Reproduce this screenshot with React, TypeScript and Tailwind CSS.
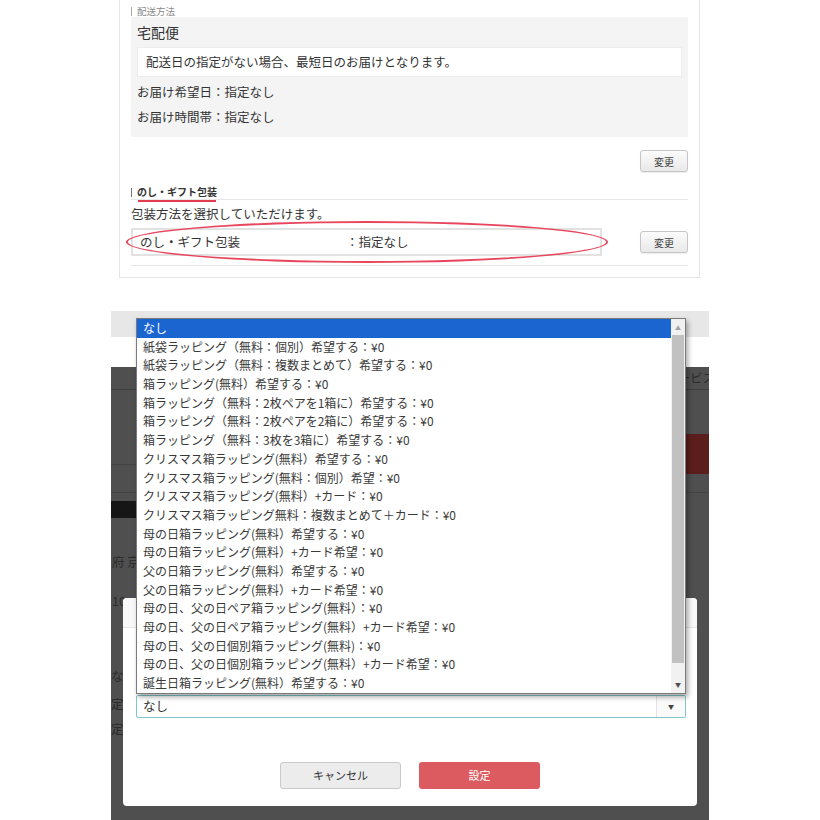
const options = [
  "なし",
  "紙袋ラッピング（無料：個別）希望する：¥0",
  "紙袋ラッピング（無料：複数まとめて）希望する：¥0",
  "箱ラッピング(無料）希望する：¥0",
  "箱ラッピング（無料：2枚ペアを1箱に）希望する：¥0",
  "箱ラッピング（無料：2枚ペアを2箱に）希望する：¥0",
  "箱ラッピング（無料：3枚を3箱に）希望する：¥0",
  "クリスマス箱ラッピング(無料）希望する：¥0",
  "クリスマス箱ラッピング(無料：個別）希望：¥0",
  "クリスマス箱ラッピング(無料）+カード：¥0",
  "クリスマス箱ラッピング無料：複数まとめて＋カード：¥0",
  "母の日箱ラッピング(無料）希望する：¥0",
  "母の日箱ラッピング(無料）+カード希望：¥0",
  "父の日箱ラッピング(無料）希望する：¥0",
  "父の日箱ラッピング(無料）+カード希望：¥0",
  "母の日、父の日ペア箱ラッピング(無料）：¥0",
  "母の日、父の日ペア箱ラッピング(無料）+カード希望：¥0",
  "母の日、父の日個別箱ラッピング(無料)：¥0",
  "母の日、父の日個別箱ラッピング(無料）+カード希望：¥0",
  "誕生日箱ラッピング(無料）希望する：¥0",
];

function ChangeButton() {
  return (
    <button className="w-[48px] h-[22px] rounded-[3px] border border-[#c6c6c6] bg-gradient-to-b from-[#fbfbfb] to-[#e9e9e9] text-[10px] text-[#444] shadow-[0_1px_1px_rgba(0,0,0,0.08)]">
      変更
    </button>
  );
}

function ShippingCard() {
  return (
    <div className="ml-[119px] w-[581px] border-x border-b border-[#e4e4e4] px-[11px] pb-[11px] text-[#333]">
      <div className="h-[17px] flex items-end gap-[5px] leading-[12px] text-[9.5px] text-[#8a8a8a]">
        <span className="w-px h-[9px] mb-[1px] bg-[#aaa]" />
        配送方法
      </div>
      <div className="bg-[#f4f4f4] px-[6px] pt-[6px] pb-[10px]">
        <p className="text-[14px] leading-[18px]">宅配便</p>
        <div className="mt-[6px] h-[30px] bg-white border border-[#ececec] flex items-center px-[8px] text-[12.5px]">
          配送日の指定がない場合、最短日のお届けとなります。
        </div>
        <p className="mt-[5px] leading-[20px] text-[12.5px]">お届け希望日：指定なし</p>
        <p className="mt-[5px] leading-[20px] text-[12.5px]">お届け時間帯：指定なし</p>
      </div>
      <div className="mt-[13px] flex justify-end">
        <ChangeButton />
      </div>

      <div className="mt-[14px] h-[14px] border-b border-[#e8e8e8] flex items-start gap-[5px] leading-[12px]">
        <span className="w-px h-[9px] mt-[2px] bg-[#777]" />
        <span className="text-[10px] font-bold text-[#333]">のし・ギフト包装</span>
      </div>
      <div className="ml-[7px] w-[78px] h-[2px] bg-[#e23c50]" />
      <p className="mt-[3px] leading-[18px] text-[12.5px]">包装方法を選択していただけます。</p>
      <div className="mt-[5px] flex items-center justify-between">
        <div className="relative w-[471px] h-[28px] border-2 border-[#e2e2e2] bg-white flex items-center text-[12.5px]">
          <span className="w-[213px] pl-[7px]">のし・ギフト包装</span>
          <span>：指定なし</span>
          <div className="absolute left-[-7px] top-[-9px] w-[482px] h-[42px] rounded-[50%] border-2 border-[#e8465c]" />
        </div>
        <ChangeButton />
      </div>
      <div className="mt-[9px] border-t border-[#e6e6e6]" />
    </div>
  );
}

function OptionList() {
  return (
    <div className="absolute left-[25px] top-[7px] w-[550px] flex border border-[#7b7b7b] bg-white shadow-[2px_3px_5px_rgba(0,0,0,0.35)]">
      <ul className="flex-1">
        {options.map((o, i) => (
          <li
            key={i}
            className={`h-[18.7px] leading-[18.7px] px-[6px] text-[12px] whitespace-nowrap ${
              i === 0 ? "bg-[#1b65d1] text-white" : "text-[#3a3a3a]"
            }`}
          >
            {o}
          </li>
        ))}
      </ul>
      <div className="w-[14px] flex flex-col bg-[#f1f1f1]">
        <div className="h-[16px] flex items-center justify-center text-[6px] text-[#a3a3a3]">▲</div>
        <div className="h-[328px] mx-[1px] bg-[#c1c1c1]" />
        <div className="flex-1" />
        <div className="h-[16px] flex items-center justify-center text-[6px] text-[#505050]">▼</div>
      </div>
    </div>
  );
}

function Modal() {
  return (
    <div className="absolute left-[12px] top-[287px] w-[574px] h-[208px] bg-white rounded-[4px]">
      <div className="h-[30px] bg-[#f8f8f8] border-b border-[#e6e6e6] rounded-t-[4px]" />
      <div className="mt-[67px] ml-[13px] w-[550px] h-[23px] border border-[#80c6cd] rounded-[2px] flex text-[12.5px] text-[#333]">
        <div className="flex-1 flex items-center pl-[6px]">なし</div>
        <div className="w-[29px] border-l border-[#e2e2e2] bg-[#fafafa] flex items-center justify-center text-[6px] text-[#444]">
          ▼
        </div>
      </div>
      <div className="mt-[44px] flex justify-center gap-[18px] text-[11px]">
        <button className="w-[121px] h-[27px] rounded-[3px] border border-[#c9c9c9] bg-[#ececec] text-[#333]">
          キャンセル
        </button>
        <button className="w-[121px] h-[27px] rounded-[3px] bg-[#dc5b61] text-white">設定</button>
      </div>
    </div>
  );
}

function DarkPage() {
  return (
    <div className="flex-1 bg-[#4f4f4f] text-[12.5px] text-[#2a2a2a]">
      <div className="h-[23px] border-b border-[#3e3e3e] flex items-center justify-end -mr-[6px]">サービス</div>
      <div className="h-[103px] border-b border-[#444] flex justify-between">
        <div className="w-[320px] h-[75px] border-b border-[#444]" />
        <div className="mt-[44px] w-[110px] h-[40px] bg-[#5c1d1d] flex items-center pl-[8px] text-[#7c4b4b] -mr-[12px]">
          注文を確認
        </div>
      </div>
      <div className="mt-[8px] w-[320px] h-[17px] bg-[#161616]" />
      <p className="mt-[36px] leading-[16px] pl-[1px]">府 京</p>
      <p className="mt-[23px] leading-[16px] pl-[1px]">10</p>
      <p className="mt-[59px] leading-[16px]">ない</p>
      <p className="mt-[12px] leading-[16px]">定</p>
      <p className="mt-[9px] leading-[16px]">定</p>
    </div>
  );
}

export default function App() {
  return (
    <div className="w-[820px] h-[820px] bg-white overflow-hidden font-['Noto_Sans_CJK_JP','Noto_Sans',sans-serif]">
      <ShippingCard />
      <div className="mt-[33px] ml-[111px] w-[598px] h-[509px] relative overflow-hidden flex flex-col">
        <div className="h-[26px] bg-[#e7e7e7]" />
        <div className="h-[30px] bg-white" />
        <DarkPage />
        <Modal />
        <OptionList />
      </div>
    </div>
  );
}
